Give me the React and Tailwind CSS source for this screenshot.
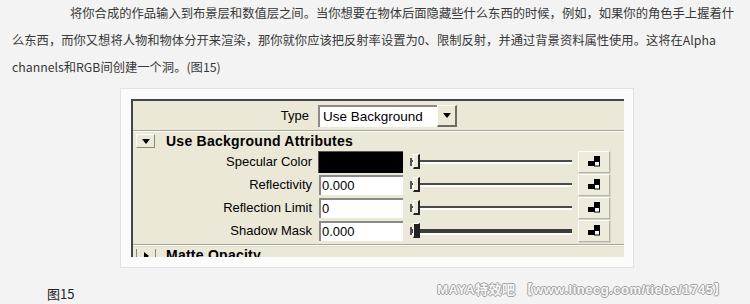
const cjk = "font-['Noto_Sans_CJK_SC',sans-serif]";
const ui = "font-['Liberation_Sans',Arial,sans-serif]";

function MapIcon() {
  return (
    <svg width="13" height="11" viewBox="0 0 13 11">
      <rect x="6" y="0" width="6" height="5" fill="#000" />
      <rect x="0" y="5" width="6" height="5" fill="#000" />
      <rect x="6.5" y="5.5" width="5" height="4.5" fill="#fff" stroke="#000" strokeWidth="1" />
    </svg>
  );
}

function Slider({ heavy }) {
  return (
    <div className="relative w-[166px] h-full">
      <div className="absolute left-[3px] w-[160px] top-[10px] flex flex-col">
        <div className={heavy ? "h-[4px] bg-[#3c3c3c]" : "h-[2px] bg-[#4a4a4a]"} />
        <div className="h-[2px] bg-white" />
      </div>
      <div className="absolute left-[1px] top-[8px] w-[2px] h-[8px] bg-[#555]" />
      <div
        className={
          "absolute left-[4px] top-[4px] w-[7px] h-[15px] border-l border-t border-white border-r-2 border-b-2 border-r-[#222] border-b-[#222] " +
          (heavy ? "bg-[#222]" : "bg-[#ece9d8]")
        }
      />
    </div>
  );
}

function MapButton() {
  return (
    <div className="ml-[3px] w-[32px] h-[22px] flex items-center justify-center bg-[#eeebdc] border-t border-l border-t-white border-l-white border-r border-b border-r-[#b8b5a6] border-b-[#b8b5a6] shadow-[1px_1px_0_#d6d3c3]">
      <MapIcon />
    </div>
  );
}

function Row({ label, value, swatch, heavy }) {
  return (
    <div className="h-[23px] flex items-center">
      <div className="w-[179px] text-right text-[13px] text-black">{label}</div>
      {swatch ? (
        <div className="ml-[6px] w-[85px] h-[22px] bg-black border-t border-l border-[#555]" />
      ) : (
        <div className="ml-[7px] w-[84px] h-[20px] bg-white border-t-2 border-l-2 border-t-[#8a8a8a] border-l-[#8a8a8a] text-[13px] leading-[18px] pl-[1px] text-black">
          {value}
        </div>
      )}
      <div className="ml-[6px] h-full">
        <Slider heavy={heavy} />
      </div>
      <MapButton />
    </div>
  );
}

function Etched() {
  return (
    <div className="flex flex-col">
      <div className="h-px bg-[#a7a596]" />
      <div className="h-px bg-white" />
    </div>
  );
}

export default function App() {
  return (
    <div className={"w-[750px] h-[304px] bg-[#f3f3f3] overflow-hidden text-[#333] " + cjk}>
      <div className="h-[88px] pl-[12px] text-[12.3px] leading-[27px] whitespace-nowrap text-[#383838]">
        <div className="pl-[58px]">将你合成的作品输入到布景层和数值层之间。当你想要在物体后面隐藏些什么东西的时候，例如，如果你的角色手上握着什</div>
        <div>么东西，而你又想将人物和物体分开来渲染，那你就你应该把反射率设置为0、限制反射，并通过背景资料属性使用。这将在Alpha</div>
        <div>channels和RGB间创建一个洞。(图15)</div>
      </div>

      <div className="ml-[120px] w-[514px] h-[180px] border border-[#e2e2e2] bg-[#fbfbfb] pt-[10px] pl-[10px]">
        <div className={"w-[493px] h-[158px] bg-[#ebe8d8] overflow-hidden flex flex-col " + ui}>
          <div className="h-[4px] bg-[#eeecdf]" />
          <div className="flex-1 flex flex-col border-t-2 border-l-2 border-[#454545]">
            <div className="h-[29px] flex items-center">
              <div className="w-[176px] text-right text-[13px] text-black">Type</div>
              <div className="ml-[9px] flex h-[22px]">
                <div className="w-[119px] bg-white border-t-2 border-l-2 border-t-[#8a8a8a] border-l-[#8a8a8a] text-[13.5px] leading-[19px] pl-[3px] text-black">
                  Use Background
                </div>
                <div className="w-[20px] bg-[#ece9d8] border-t border-l border-white border-r-2 border-b-2 border-r-[#6d6b62] border-b-[#6d6b62] flex items-center justify-center">
                  <svg width="8" height="5" viewBox="0 0 8 5"><path d="M0 0H8L4 5Z" fill="#000" /></svg>
                </div>
              </div>
            </div>
            <Etched />
            <div className="h-[18px] flex items-center">
              <div className="ml-[3px] w-[19px] h-[14px] bg-[#ece9d8] border-t border-l border-white border-r border-b border-r-[#8b897e] border-b-[#8b897e] flex items-center justify-center">
                <svg width="8" height="5" viewBox="0 0 8 5"><path d="M0 0H8L4 5Z" fill="#000" /></svg>
              </div>
              <div className="ml-[11px] text-[14px] font-bold text-black tracking-[0.25px]">Use Background Attributes</div>
            </div>
            <Row label="Specular Color" swatch />
            <Row label="Reflectivity" value="0.000" />
            <Row label="Reflection Limit" value="0" />
            <Row label="Shadow Mask" value="0.000" heavy />
            <div className="mt-[2px]">
              <Etched />
            </div>
            <div className="h-[1px] bg-[#dedbc9]" />
            <div className="h-[17px] flex items-center">
              <div className="ml-[3px] w-px h-[14px] bg-[#8b897e]" />
              <div className="w-[18px] h-[14px] flex items-center justify-center">
                <svg width="5" height="8" viewBox="0 0 5 8"><path d="M0 0V8L5 4Z" fill="#000" /></svg>
              </div>
              <div className="w-px h-[14px] bg-[#8b897e]" />
              <div className="ml-[10px] text-[14px] font-bold text-black tracking-[0.25px]">Matte Opacity</div>
            </div>
          </div>
        </div>
      </div>

      <div className="mt-[16px] flex items-start">
        <div className="ml-[47px] mt-[3px] text-[13px] leading-[14px] text-[#222]">图15</div>
        <div className={"ml-auto mr-[23px] -mt-[1px] text-[13px] leading-[14px] font-bold text-[#f7f7f7] tracking-[0.5px] [text-shadow:1px_0_0_#a0a0a0,-1px_0_0_#a0a0a0,0_1px_0_#a0a0a0,0_-1px_0_#a0a0a0] font-['Liberation_Sans','Noto_Sans_CJK_SC',sans-serif] whitespace-nowrap"}>
          MAYA特效吧&nbsp;【www.linecg.com/tieba/1745】
        </div>
      </div>
    </div>
  );
}
